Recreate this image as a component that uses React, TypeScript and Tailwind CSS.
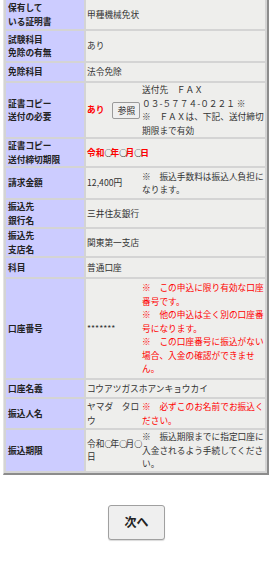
import React from 'react';

// placeholder circle in dates, drawn black inside red/gray text
const Maru = () => <span className="text-[8px] font-bold text-black tracking-[-1.8px]">○</span>;

const Row = ({ label, h, children }: { label: React.ReactNode; h: string; children: React.ReactNode }) => (
  <tr>
    <td className={`${h} bg-[#ccccff] pl-[2px] align-middle font-bold text-[#222]`}>{label}</td>
    <td className="bg-[#eeeeec] pl-[1px] align-middle text-[#333]">{children}</td>
  </tr>
);

const Split = ({ left, right }: { left: React.ReactNode; right: React.ReactNode }) => (
  <div className="flex items-center">
    <div className="w-[55px] shrink-0">{left}</div>
    <div className="flex-1 whitespace-nowrap">{right}</div>
  </div>
);

const App = () => {
  return (
    <div className="min-h-[580px] overflow-hidden bg-white font-['Noto_Sans_CJK_JP',sans-serif] text-[8.7px] leading-[13.5px]">
      <table className="-mt-[3px] ml-[3px] w-[266px] table-fixed border-separate border-spacing-[2px] border-t border-l border-r-2 border-b-2 border-t-[#e4e4e4] border-l-[#e4e4e4] border-r-[#8c8c8c] border-b-[#8c8c8c] bg-[#d4d4d4]">
        <colgroup>
          <col className="w-[78px]" />
          <col />
        </colgroup>
        <tbody>
          <Row h="h-[29px]" label={<>保有して<br />いる証明書</>}>甲種機械免状</Row>
          <Row h="h-[30px]" label={<>試験科目<br />免除の有無</>}>あり</Row>
          <Row h="h-[18px]" label="免除科目">法令免除</Row>
          <Row h="h-[52px]" label={<>証書コピー<br />送付の必要</>}>
            <Split
              left={
                <div className="flex items-center gap-[8px]">
                  <span className="font-bold text-[#ff0000]">あり</span>
                  <button className="h-[17px] w-[28px] rounded-[2px] border border-[#9a9a9a] bg-[#efefef] text-center leading-[15px] text-[#222]">
                    参照
                  </button>
                </div>
              }
              right={
                <>
                  送付先　ＦＡＸ<br />
                  ０３-５７７４-０２２１ ※<br />
                  ※　ＦＡＸは、下記、送付締切<br />
                  期限まで有効
                </>
              }
            />
          </Row>
          <Row h="h-[27px]" label={<>証書コピー<br />送付締切期限</>}>
            <span className="font-bold text-[#ff0000]">
              令和<Maru />年<Maru />月<Maru />日
            </span>
          </Row>
          <Row h="h-[30px]" label="請求金額">
            <Split left="12,400円" right={<>※　振込手数料は振込人負担に<br />なります。</>} />
          </Row>
          <Row h="h-[26px]" label={<>振込先<br />銀行名</>}>三井住友銀行</Row>
          <Row h="h-[26px]" label={<>振込先<br />支店名</>}>関東第一支店</Row>
          <Row h="h-[19px]" label="科目">普通口座</Row>
          <Row h="h-[99px]" label="口座番号">
            <Split
              left="*******"
              right={
                <span className="text-[#ff0000]">
                  ※　この申込に限り有効な口座<br />
                  番号です。<br />
                  ※　他の申込は全く別の口座番<br />
                  号になります。<br />
                  ※　この口座番号に振込がない<br />
                  場合、入金の確認ができませ<br />
                  ん。
                </span>
              }
            />
          </Row>
          <Row h="h-[17px]" label="口座名義">コウアツガスホアンキョウカイ</Row>
          <Row h="h-[29px]" label="振込人名">
            <Split
              left={<>ヤマダ　タロ<br />ウ</>}
              right={<span className="text-[#ff0000]">※　必ずこのお名前でお振込く<br />ださい。</span>}
            />
          </Row>
          <Row h="h-[39px]" label="振込期限">
            <Split
              left={<span className="whitespace-nowrap">令和<Maru />年<Maru />月<Maru /><br />日</span>}
              right={<>※　振込期限までに指定口座に<br />入金されるよう手続してくださ<br />い。</>}
            />
          </Row>
        </tbody>
      </table>

      <div className="mt-[30px] flex justify-center pl-[3px]">
        <button className="h-[35px] w-[57px] rounded-[3px] border border-[#a0a0a0] bg-[#efefef] text-[12px] font-bold text-[#222] shadow-[0_1px_1px_rgba(0,0,0,0.15)]">
          次へ
        </button>
      </div>
    </div>
  );
};

export default App;
